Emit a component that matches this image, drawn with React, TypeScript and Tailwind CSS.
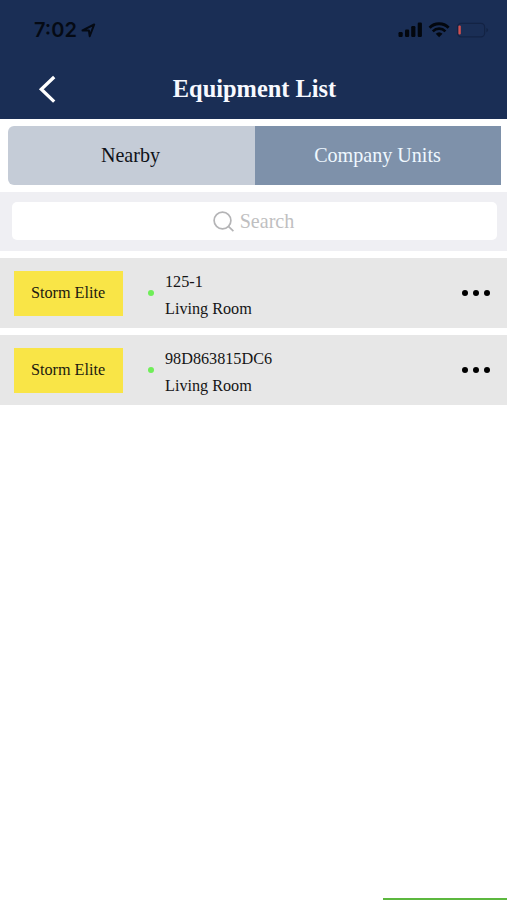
import React from 'react';

interface Equipment {
  type: string;
  name: string;
  location: string;
}

const equipment: Equipment[] = [
  { type: 'Storm Elite', name: '125-1', location: 'Living Room' },
  { type: 'Storm Elite', name: '98D863815DC6', location: 'Living Room' },
];

const StatusBar: React.FC = () => (
  <div className="flex h-[60px] items-center justify-between pl-[34px] pr-[18px]">
    <div className="flex items-center gap-[4px]">
      <span className="font-['Inter',sans-serif] text-[20px] leading-[24px] font-semibold text-[#050a14]">
        7:02
      </span>
      <svg width="15" height="15" viewBox="0 0 15 15" fill="none">
        <path d="M1.5 7.4 13.2 1.5 8.7 13.2 7.9 7.4Z" stroke="#050a14" strokeWidth="2" strokeLinejoin="round" />
      </svg>
    </div>
    <svg width="91" height="18" viewBox="0 0 91 18" fill="none">
      <rect x="0.5" y="11" width="4.2" height="5" rx="1.2" fill="#03070e" />
      <rect x="7" y="8.5" width="4.2" height="7.5" rx="1.2" fill="#03070e" />
      <rect x="13.2" y="5" width="4.2" height="11" rx="1.2" fill="#03070e" />
      <rect x="19.7" y="1.5" width="4.2" height="14.5" rx="1.2" fill="#03070e" />
      <path d="M31.6 6.7C36.6 1.4 45.6 1.4 50.6 6.7" stroke="#03070e" strokeWidth="2.8" />
      <path d="M34.8 10.3C38.3 6.7 43.9 6.7 47.4 10.3" stroke="#03070e" strokeWidth="2.6" />
      <path d="M37.7 12.8Q41.1 9.8 44.5 12.8L41.1 16.3Z" fill="#03070e" />
      <rect x="59.6" y="2.3" width="27" height="13.6" rx="3.6" stroke="#132344" strokeWidth="1.2" />
      <rect x="60.4" y="4.5" width="2.4" height="9" rx="1" fill="#d4504f" />
      <path d="M88.4 7v4.2q1.7-.5 1.7-2.1T88.4 7Z" fill="#132344" />
    </svg>
  </div>
);

const Header: React.FC = () => (
  <header className="h-[119px] bg-[#1a2e55]">
    <StatusBar />
    <div className="grid h-[58px] grid-cols-[80px_1fr_80px] items-center">
      <button type="button" aria-label="Back" className="pb-px pl-[38px]">
        <svg width="19" height="28" viewBox="0 0 19 28" fill="none">
          <path d="M16.2 2 3.3 14.3 16.2 26.6" stroke="#fff" strokeWidth="3.3" />
        </svg>
      </button>
      <h1 className="pl-[2px] text-center text-[24.4px] leading-[28px] font-bold text-[#f7f9ff]">Equipment List</h1>
    </div>
  </header>
);

const EquipmentRow: React.FC<{ item: Equipment }> = ({ item }) => (
  <li className="flex h-[70px] items-center bg-[#e7e7e7] pr-[17px] pl-[14px]">
    <div className="flex h-[45px] w-[109px] items-center justify-center bg-[#f9e547] pr-px text-[16.2px] text-[#1c1a10]">
      {item.type}
    </div>
    <span className="ml-[25px] size-[6px] rounded-full bg-[#6fee58]" />
    <div className="ml-[11px] flex-1 pt-[6px] text-[16.2px] leading-[26.6px] text-[#151515]">
      <p>{item.name}</p>
      <p>{item.location}</p>
    </div>
    <button type="button" aria-label="More" className="flex gap-[5px]">
      <span className="size-[6px] rounded-full bg-black" />
      <span className="size-[6px] rounded-full bg-black" />
      <span className="size-[6px] rounded-full bg-black" />
    </button>
  </li>
);

const App: React.FC = () => {
  return (
    <div className="flex h-[900px] w-[507px] flex-col overflow-hidden bg-white font-['Liberation_Serif',serif]">
      <Header />

      {/* Tabs */}
      <div className="mt-[7px] mr-[6px] ml-[8px] flex h-[58.5px] text-[20.1px]">
        <button type="button" className="w-[247px] rounded-l-[6px] bg-[#c5ccd7] pr-[2px] text-[#101218]">
          Nearby
        </button>
        <button type="button" className="flex-1 bg-[#7e91aa] pr-px text-[#eff8ff]">
          Company Units
        </button>
      </div>

      {/* Search */}
      <div className="mt-[7.5px] h-[59px] bg-[#efeff3] pt-[10px] pr-[10px] pl-[12px]">
        <div className="flex h-[38px] items-center justify-center gap-[6px] rounded-[5px] bg-white pr-[2px] text-[20.1px] text-[#bfbfc1]">
          <svg width="21" height="21" viewBox="0 0 21 21" fill="none" stroke="#b4b4b6" strokeWidth="1.7">
            <circle cx="9.5" cy="9.5" r="8.4" />
            <path d="m15.4 15.4 5 4.8" />
          </svg>
          <span className="pt-px">Search</span>
        </div>
      </div>

      <ul className="mt-[7px] flex flex-col gap-[7px]">
        {equipment.map((item) => (
          <EquipmentRow key={item.name} item={item} />
        ))}
      </ul>

      <div className="mt-auto ml-[383px] h-[2px] bg-[#5cb83f]" />
    </div>
  );
};

export default App;
